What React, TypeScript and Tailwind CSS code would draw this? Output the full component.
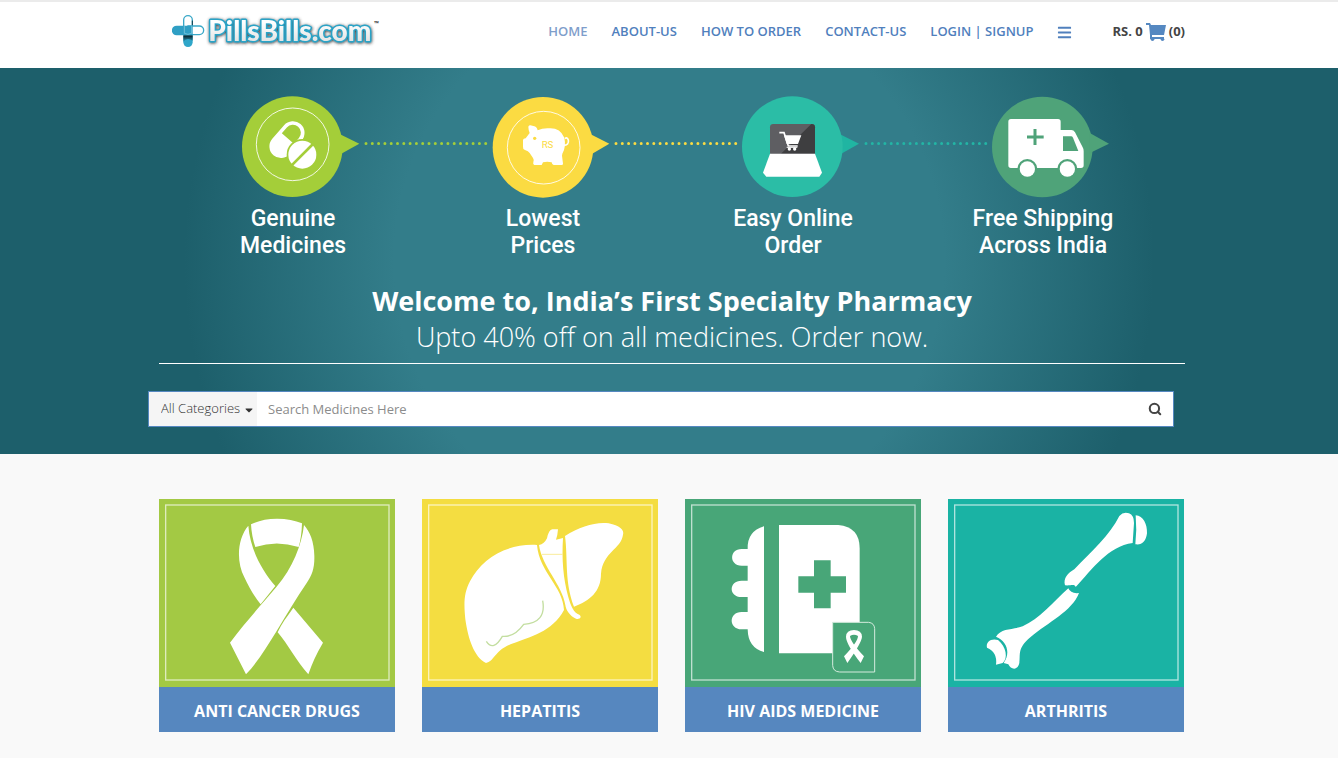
import type { ReactNode } from "react";
import { Search } from "lucide-react";
import { FaBars, FaCaretDown } from "react-icons/fa";

type Step = {
  lines: [string, string];
  viewBox: string;
  dots: string;
  art: ReactNode;
};

type Category = {
  name: string;
  viewBox: string;
  frame: { x: number; y: number };
  background: string;
  art: ReactNode;
};

const NAV_LINKS = ["Home", "About-us", "How to order", "Contact-us", "Login | Signup"];

const STEPS: Step[] = [
  {
    lines: ["Genuine", "Medicines"],
    viewBox: "65 48 354 306",
    dots: "text-[#a4ce39]",
    art: (
      <>
        <g fill="#a4ce39">
          <circle cx="216" cy="200" r="151" />
          <path d="M356 161 417 191 356 225Z" />
        </g>
        <circle cx="217" cy="193" r="109" fill="none" stroke="#fff" strokeOpacity="0.85" strokeWidth="3" />
        <g transform="rotate(41 202 178)">
          <rect x="166" y="118" width="70" height="124" rx="35" fill="#fff" />
          <path d="M177 176V153a24 24 0 0 1 48 0v23Z" fill="#a4ce39" />
        </g>
        <circle cx="246" cy="224" r="47" fill="#a4ce39" />
        <circle cx="246" cy="224" r="42" fill="#fff" />
        <path d="M214 256 278 192" stroke="#a4ce39" strokeWidth="8" />
      </>
    ),
  },
  {
    lines: ["Lowest", "Prices"],
    viewBox: "817 48 354 306",
    dots: "text-[#fbdb42]",
    art: (
      <>
        <g fill="#fbdb42">
          <circle cx="970" cy="202" r="151" />
          <path d="M1110 161 1169 191 1110 226Z" />
        </g>
        <circle cx="972" cy="203" r="109" fill="none" stroke="#fff" strokeOpacity="0.85" strokeWidth="3" />
        <path
          d="M926 140q2-6 12-3 14 1 16 14 16-8 38-6 30 0 42 28 6 28-6 48l-1 6 3 24q0 4-4 4h-24q-5 0-6-8-14-4-26 0l-4 8h-22q-5-2-3-9 3-6-1-12l-10-15q-4-6-14-9-7-2-6-10v-20q1-5 8-5l12-16q-4-10-4-19Z"
          fill="#fff"
        />
        <path d="M1031 196q18 0 15-16-4-10-10-4" fill="none" stroke="#fff" strokeWidth="5" />
        <circle cx="945" cy="175" r="5" fill="#fbdb42" />
        <text x="966" y="204" fill="#fbdb42" className="font-[Roboto] text-[29px]">
          RS
        </text>
      </>
    ),
  },
  {
    lines: ["Easy Online", "Order"],
    viewBox: "126 48 354 306",
    dots: "text-[#23b5a5]",
    art: (
      <>
        <path d="M417 161 477 191 417 225Z" fill="#20b5a2" />
        <circle cx="277" cy="200" r="151" fill="#2bbda6" />
        <rect x="210" y="132" width="135" height="96" rx="10" fill="#5e5e62" />
        <path d="M334 132q11 0 11 10v79H243Z" fill="#3e3e40" />
        <path d="M210 221h135l21 57-8 12H199l-10-12Z" fill="#fff" />
        <path d="M238 158h14l13 40h28" fill="none" stroke="#fff" strokeWidth="5" />
        <path d="M252 166h52l-10 26h-34Z" fill="#fff" />
        <path d="M260 202h32" stroke="#fff" strokeWidth="3" />
        <circle cx="268" cy="207" r="5" fill="#fff" />
        <circle cx="284" cy="207" r="5" fill="#fff" />
      </>
    ),
  },
  {
    lines: ["Free Shipping", "Across India"],
    viewBox: "876 48 354 306",
    dots: "",
    art: (
      <>
        <g fill="#4fa379">
          <circle cx="1027" cy="201" r="151" />
          <path d="M1168 158 1227 191 1168 220Z" />
        </g>
        <path
          d="M933 117h141q8 0 8 8v25h32q7 0 11 7l23 45q3 5 3 12v42q0 8-8 8H933q-8 0-8-8V125q0-8 8-8Z"
          fill="#fff"
        />
        <path d="M1089 169h24q4 0 6 4l16 40h-46Z" fill="#4fa379" />
        <path d="M1005 147v48M981 171h50" stroke="#4fa379" strokeWidth="9" />
        <circle cx="982" cy="267" r="30" fill="#4fa379" />
        <circle cx="1102" cy="267" r="30" fill="#4fa379" />
        <circle cx="982" cy="267" r="23" fill="#fff" />
        <circle cx="1102" cy="267" r="23" fill="#fff" />
      </>
    ),
  },
];

const CATEGORIES: Category[] = [
  {
    name: "Anti Cancer Drugs",
    viewBox: "27 27 708 564",
    frame: { x: 47, y: 45 },
    background: "bg-[#a3c944]",
    art: (
      <g fill="#fff">
        <path d="M303 103Q336 86 381 86 425 86 456 100 455 140 446 171 380 150 316 171 305 140 303 103Z" />
        <path d="M295 107C262 145 258 215 283 262 296 290 311 317 332 343L376 288C334 240 300 175 295 107Z" />
        <path d="M462 105C480 125 492 155 493 197 494 235 486 256 470 279 439 325 414 367 380 423 350 472 322 517 288 553L240 458C290 391 334 345 381 289 427 235 455 165 462 105Z" />
        <path d="M430 353 519 458Q491 505 475 553C440 514 414 463 383 427 395 400 411 380 430 353Z" />
      </g>
    ),
  },
  {
    name: "Hepatitis",
    viewBox: "36 27 708 564",
    frame: { x: 56, y: 45 },
    background: "bg-[#f4dd41]",
    art: (
      <>
        <g fill="#fff">
          <path d="M381 165C290 160 215 205 180 274 160 312 162 345 166 388 174 445 192 502 228 519 254 515 252 480 310 460 358 441 427 426 462 360 460 290 388 247 381 165Z" />
          <path d="M387 165Q403 162 411 145 416 120 427 118H444Q443 135 438 149L459 144C455 210 460 265 474 318 483 350 491 368 508 374 517 381 509 389 498 386 480 378 468 361 466 345 457 285 396 230 387 165Z" />
          <path d="M465 138C510 110 556 95 596 100 628 106 644 121 639 134 633 178 579 185 573 251 573 305 540 331 492 350 463 275 474 205 465 138Z" />
        </g>
        <path d="M396 193H459" stroke="#f9ec9c" strokeWidth="3" />
        <path
          d="M229 454Q250 486 277 439 313 442 341 403 410 398 398 332"
          fill="none"
          stroke="#c3dea0"
          strokeWidth="4"
        />
      </>
    ),
  },
  {
    name: "HIV AIDS Medicine",
    viewBox: "30 27 708 564",
    frame: { x: 50, y: 45 },
    background: "bg-[#48a678]",
    art: (
      <>
        <g fill="#fff">
          <path d="M267 109V486Q219 474 218 418H200C160 418 160 366 200 366H218V321H200C160 321 160 272 200 272H218V227H200C162 227 162 177 200 177H218Q216 124 267 109Z" />
          <path d="M312 105H490Q554 111 554 175V490H312Z" />
        </g>
        <path d="M417 211h50v48h46v49h-46v47h-50v-47h-47v-49h47Z" fill="#48a678" />
        <path
          d="M473 397H581Q598 399 599 416V546H494Q474 545 473 526Z"
          fill="#48a678"
          stroke="#d5ebde"
          strokeWidth="3"
        />
        <path
          d="M537 420Q560 420 561 440 560 458 517 519L507 499Q549 455 549 438 537 430 525 438 526 456 567 499L557 519Q513 462 513 440 514 420 537 420Z"
          fill="#fff"
        />
      </>
    ),
  },
  {
    name: "Arthritis",
    viewBox: "24 27 708 564",
    frame: { x: 44, y: 45 },
    background: "bg-[#1ab3a4]",
    art: (
      <g fill="#fff">
        <path d="M538 78Q550 64 567 70 582 76 582 99L578 159C505 168 457 238 407 291 404 280 392 288 375 286 369 265 384 249 403 238 455 183 510 135 538 78Z" />
        <path d="M587 76C610 78 622 102 621 130 618 154 606 166 586 163Q591 120 587 76Z" />
        <path d="M385 295Q392 312 417 309C397 363 325 396 271 442 231 476 242 492 238 519 232 544 212 538 205 523L191 519C212 490 202 454 168 440 184 413 218 420 248 409 298 387 339 337 385 295Z" />
        <path d="M141 473C137 455 154 444 174 450 199 470 205 506 188 519L168 524Q173 486 141 473Z" />
      </g>
    ),
  },
];

function Logo() {
  return (
    <svg viewBox="36 42 630 105" className="h-[35px] w-[210px]" role="img" aria-label="PillsBills.com">
      <defs>
        <linearGradient id="pill-shade" x1="0" x2="0" y1="0" y2="1">
          <stop offset="0" stopColor="#06191f" />
          <stop offset="1" stopColor="#2fa6c9" />
        </linearGradient>
        <linearGradient id="letters" x1="0" x2="0" y1="0" y2="1">
          <stop offset="0.3" stopColor="#fff" />
          <stop offset="1" stopColor="#dcdcdc" />
        </linearGradient>
        <filter id="glow" x="-10%" y="-30%" width="120%" height="160%">
          <feDropShadow dx="1" dy="2" stdDeviation="5" floodColor="#333" floodOpacity="1" />
        </filter>
      </defs>
      <path d="M71 78V60a13 13 0 0 1 26 0v18" fill="#fff" stroke="#3aa8c8" strokeWidth="4" />
      <path d="M97 62V78" stroke="#123c49" strokeWidth="3" />
      <path d="M84 78H118a13 13 0 0 1 0 26H84Z" fill="#fff" stroke="#3aa8c8" strokeWidth="4" />
      <path d="M70 106H98V127a14 14 0 0 1-28 0Z" fill="#2fa6c9" />
      <path d="M70 106H98V122Q80 110 70 126Z" fill="url(#pill-shade)" />
      <path d="M98 77V106H50a14 14 0 0 1 0-29Z" fill="#2f9fc4" />
      <path d="M73 77V100Q84 106 95 100V77" fill="none" stroke="#8fd0e2" strokeWidth="2" />
      <text
        x="145"
        y="122"
        fill="url(#letters)"
        stroke="#2ba3c6"
        strokeWidth="9"
        strokeLinejoin="round"
        paintOrder="stroke"
        filter="url(#glow)"
        className="font-[Lato] text-[84px] font-black"
      >
        PillsBills.com
      </text>
      <text x="641" y="82" fill="#333" className="font-[Roboto] text-[25px] font-bold">
        ™
      </text>
    </svg>
  );
}

function CartIcon() {
  return (
    <svg viewBox="0 0 20 18" className="h-[18px] w-5" fill="#5588c1" aria-hidden="true">
      <path d="M0 0h4l1 2h15l-2 10H6v2h12v2H4v-4L3 2H0Z" />
      <circle cx="6.5" cy="16.2" r="1.8" />
      <circle cx="16.5" cy="16.2" r="1.8" />
    </svg>
  );
}

function Header() {
  return (
    <header className="border-t-2 border-[#ebebeb] bg-white pl-1.5">
      <div className="mx-auto flex h-[66px] w-full max-w-[1026px] items-start justify-between pl-[13px]">
        <a href="#" className="mt-3">
          <Logo />
        </a>
        <div className="mt-5 flex h-5 items-center gap-10 text-[13px]">
          <nav className="flex items-center gap-6 font-semibold text-[#5080bd] uppercase">
            {NAV_LINKS.map((link, i) => (
              <a key={link} href="#" className={i === 0 ? "text-[#7f9ecb]" : ""}>
                {link}
              </a>
            ))}
            <button type="button" aria-label="Menu">
              <FaBars className="size-[15px]" />
            </button>
          </nav>
          <a href="#" className="flex items-center gap-[3px] font-bold text-[#444]">
            RS. 0
            <CartIcon />
            (0)
          </a>
        </div>
      </div>
    </header>
  );
}

function Connector({ className }: { className: string }) {
  return (
    <svg className={`mx-1 mt-[46px] h-[3px] w-0 flex-1 ${className}`} aria-hidden="true">
      <line
        x1="2"
        x2="100%"
        y1="1.5"
        y2="1.5"
        stroke="currentColor"
        strokeWidth="3"
        strokeLinecap="round"
        strokeDasharray="0 6.3"
      />
    </svg>
  );
}

function Steps() {
  return (
    <ol className="flex pr-[75px] pl-[83px]">
      {STEPS.map((step, i) => {
        const last = i === STEPS.length - 1;
        return (
          <li key={step.lines[0]} className={last ? "flex-none" : "min-w-0 flex-1"}>
            <div className="flex items-start">
              <svg viewBox={step.viewBox} className="h-[102px] w-[118px] shrink-0" aria-hidden="true">
                {step.art}
              </svg>
              {!last && <Connector className={step.dots} />}
            </div>
            <p className="mt-[7px] flex w-[102px] justify-center text-center font-[Roboto] text-[23px] leading-[27px] font-medium whitespace-nowrap">
              <span>
                {step.lines[0]}
                <br />
                {step.lines[1]}
              </span>
            </p>
          </li>
        );
      })}
    </ol>
  );
}

function SearchBar() {
  return (
    <form className="mt-[27px] mr-[11px] -ml-[11px] flex h-9 border border-[#5588c1] bg-white text-[13px]">
      <div className="relative w-[108px] bg-[#f5f5f5] text-[#333]">
        <select aria-label="Category" className="h-[33px] w-full appearance-none pl-3 font-light outline-none">
          <option>All Categories</option>
        </select>
        <FaCaretDown className="pointer-events-none absolute top-3 right-[2px] size-3" />
      </div>
      <input
        type="text"
        aria-label="Search medicines"
        placeholder="Search Medicines Here"
        className="min-w-0 flex-1 px-[11px] pt-px text-[#444] outline-none placeholder:text-[#8c8c8c]"
      />
      <button type="submit" aria-label="Search" className="px-[11px] text-[#444]">
        <Search className="size-[14px]" strokeWidth={3.5} />
      </button>
    </form>
  );
}

function CategoryCard({ category }: { category: Category }) {
  return (
    <a href="#" className="flex flex-col">
      <svg viewBox={category.viewBox} className={`w-full ${category.background}`} aria-hidden="true">
        <rect
          x={category.frame.x}
          y={category.frame.y}
          width="670"
          height="525"
          fill="none"
          stroke="#fff"
          strokeOpacity="0.65"
          strokeWidth="4"
        />
        {category.art}
      </svg>
      <span className="bg-[#5687bf] pt-3 pb-[9px] text-center text-base font-bold text-white uppercase">
        {category.name}
      </span>
    </a>
  );
}

export default function App() {
  return (
    <div className="min-h-screen bg-[#f9f9f9] font-['Open_Sans',sans-serif]">
      <Header />
      <main>
        <section className="bg-[radial-gradient(circle_at_center,#337d8a_275px,#1d5f6b_485px)] pt-7 pb-[27px] pl-1.5 text-white">
          <div className="mx-auto w-full max-w-[1026px]">
            <Steps />
            <div className="mt-6 border-b border-white pb-2 text-center text-[27px] leading-9">
              <h1 className="font-bold">Welcome to, India’s First Specialty Pharmacy</h1>
              <p className="font-light">Upto 40% off on all medicines. Order now.</p>
            </div>
            <SearchBar />
          </div>
        </section>
        <section className="py-[45px] pl-1.5">
          <div className="mx-auto grid w-full max-w-[1026px] grid-cols-4 gap-[27px] pr-px">
            {CATEGORIES.map((category) => (
              <CategoryCard key={category.name} category={category} />
            ))}
          </div>
        </section>
      </main>
    </div>
  );
}
